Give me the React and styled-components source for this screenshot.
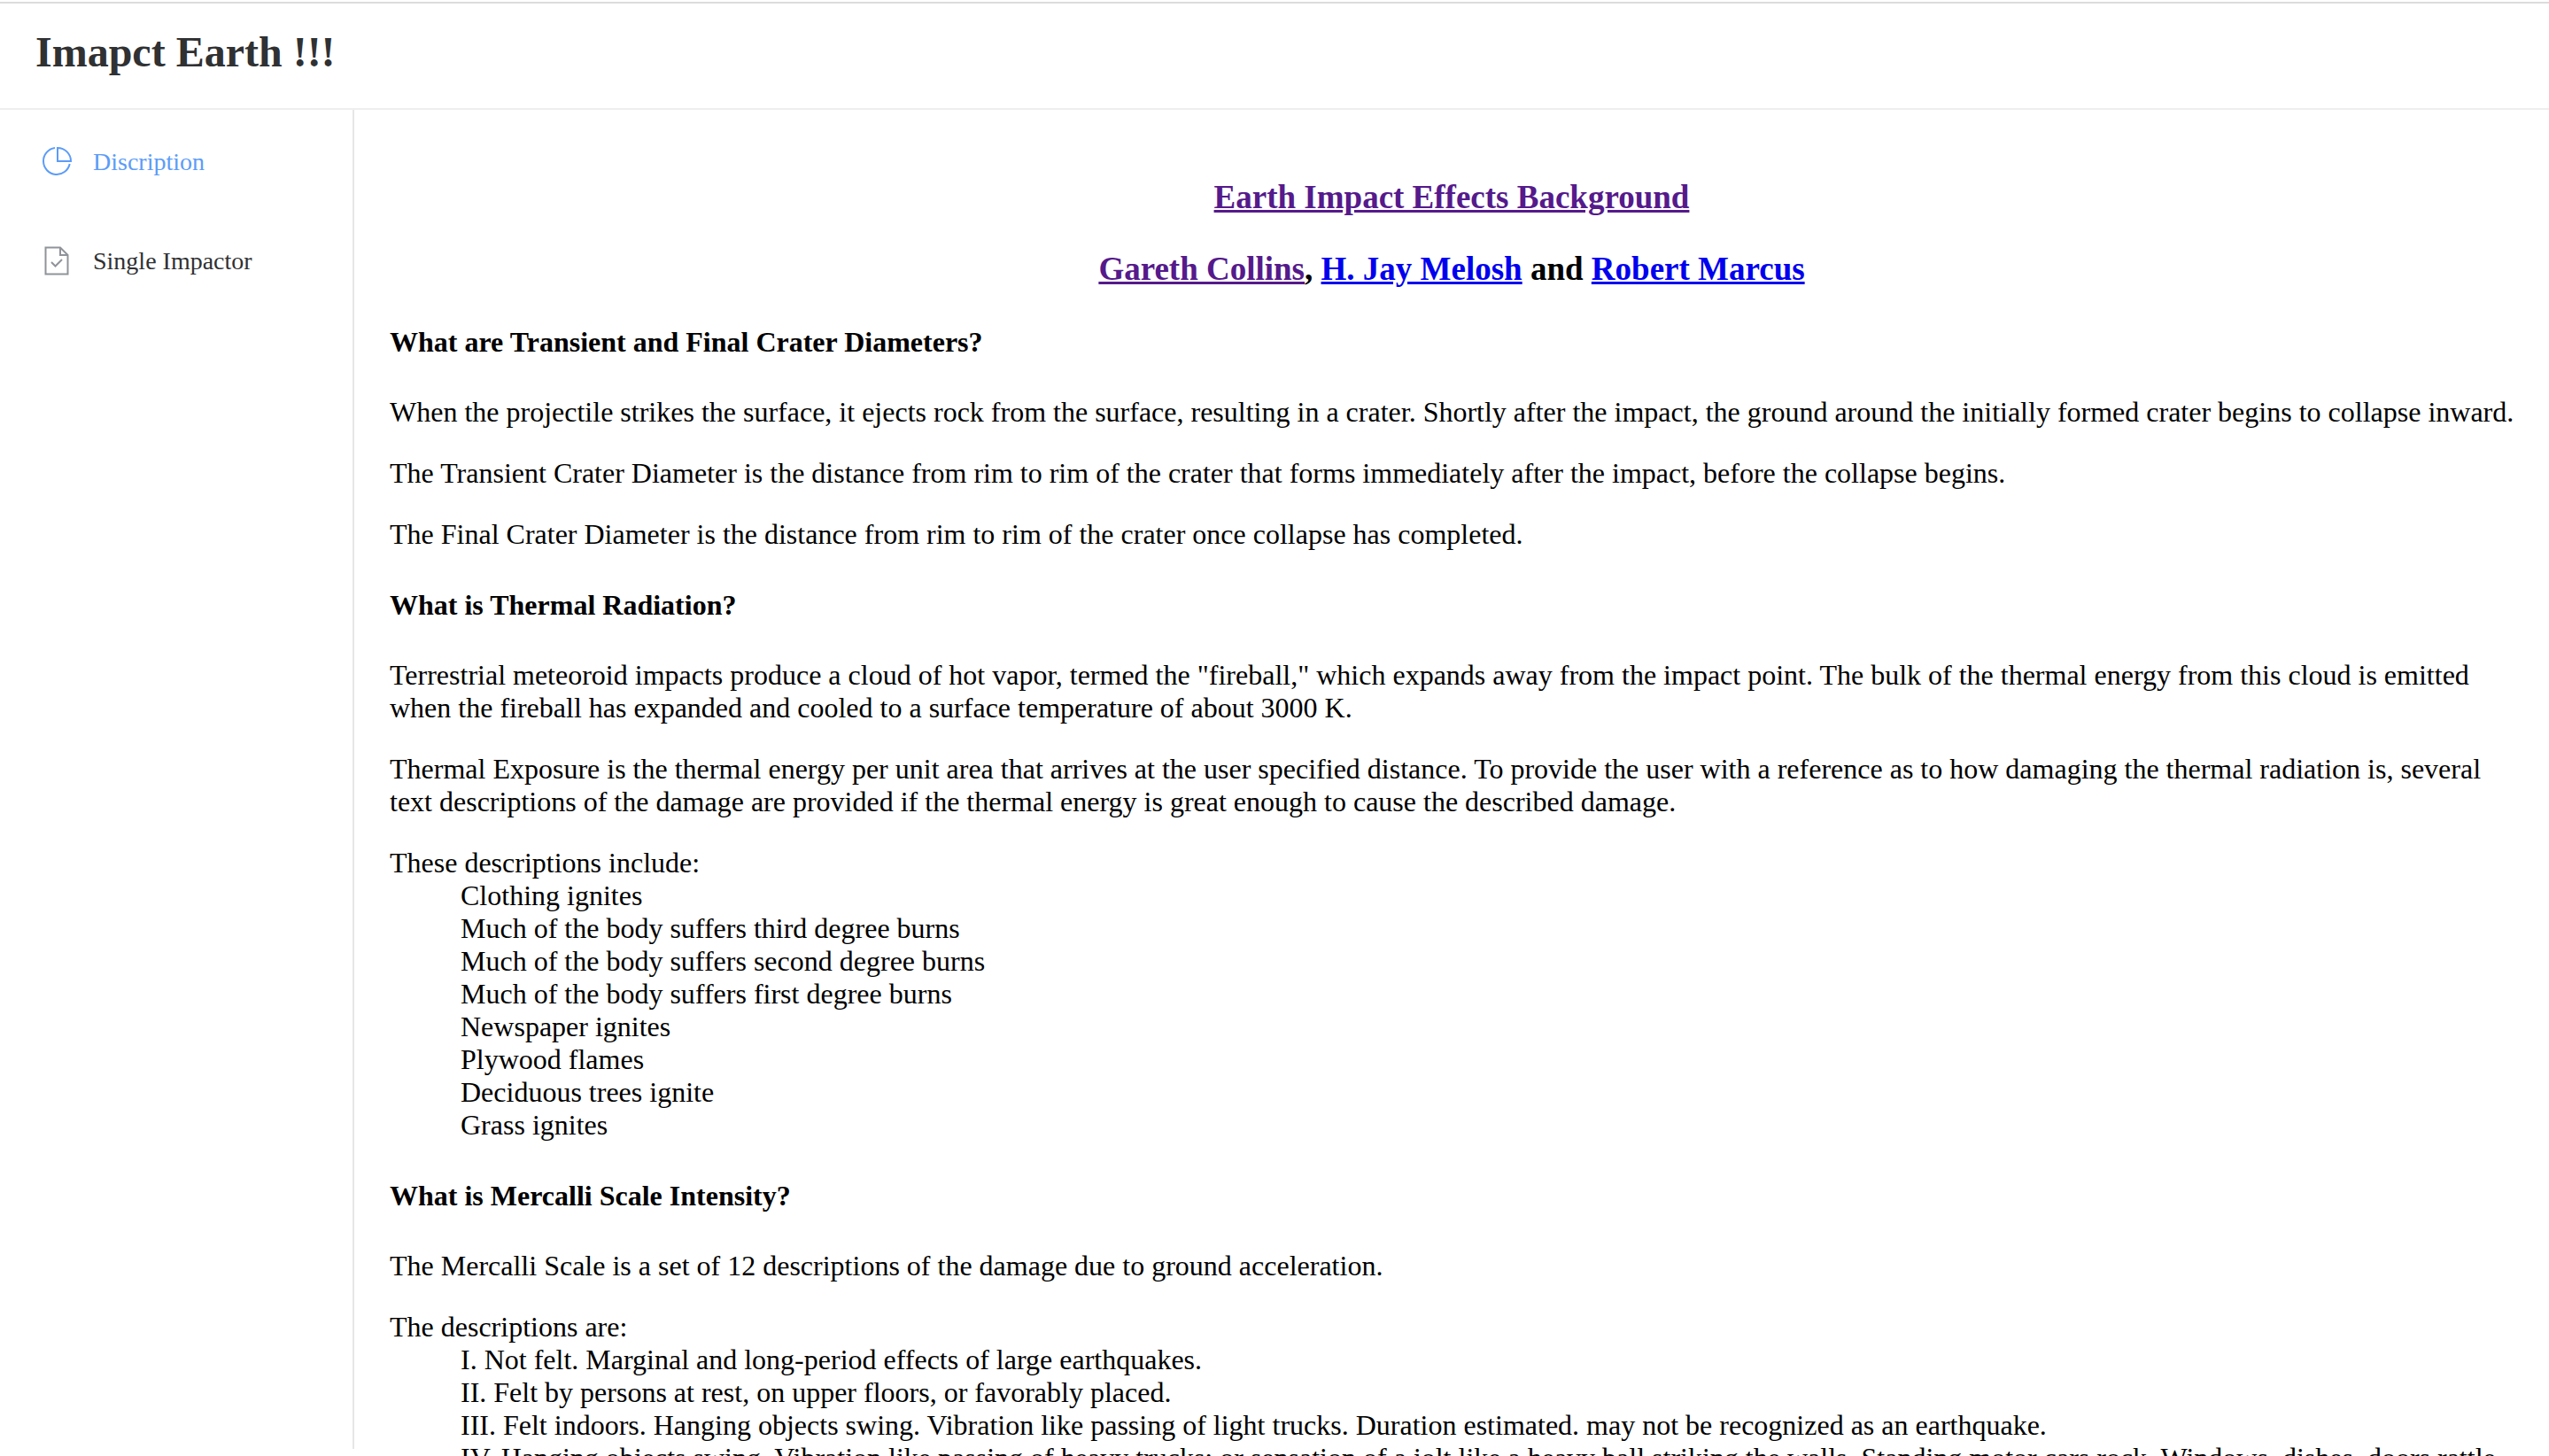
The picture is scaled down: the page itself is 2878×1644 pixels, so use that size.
import React from "react";
import styled, { createGlobalStyle } from "styled-components";

const GlobalStyle = createGlobalStyle`
  *, *::before, *::after { box-sizing: border-box; }
  body {
    margin: 0;
    background: #fff;
    color: #000;
    font: 32px/37px "Liberation Serif", "Times New Roman", Times, serif;
  }
`;

const Page = styled.div`
  display: flex;
  flex-direction: column;
  height: 100vh;
  padding-top: 2px;
  overflow: hidden;
`;

const Header = styled.header`
  display: flex;
  flex: none;
  align-items: center;
  height: 122px;
  padding: 0 40px 8px;
  border-top: 2px solid #dcdcdc;
  border-bottom: 2px solid #eee;
`;

const Title = styled.h1`
  margin: 0;
  color: #303133;
  font-size: 48px;
  line-height: 56px;
`;

const Body = styled.div`
  display: flex;
  flex: 1;
  min-height: 0;
`;

const Sidebar = styled.nav`
  flex: none;
  width: 400px;
  margin-bottom: 8px;
  padding-top: 3px;
  border-right: 2px solid #e6e6e6;
`;

const MenuItem = styled.a`
  display: flex;
  align-items: center;
  gap: 17px;
  height: 112px;
  padding: 0 40px;
  color: ${(p) => (p.$active ? "#5c9cf8" : "#303133")};
  font-size: 28px;
  line-height: 32px;
  text-decoration: none;
`;

const Icon = styled.svg`
  flex: none;
  width: 48px;
  height: 48px;
  fill: none;
  stroke: ${(p) => (p.$active ? "#5c9cf8" : "#909399")};
  stroke-width: 2;
`;

const Content = styled.main`
  flex: 1;
  min-width: 0;
  padding: 1px 32px 40px 40px;
  overflow: hidden;
`;

const Article = styled.article`
  padding-top: 38px;
`;

const Heading = styled.h2`
  margin: 38px 0;
  padding-right: 8px;
  font-size: 37px;
  line-height: 43px;
  text-align: center;
`;

const Subheading = styled.h3`
  margin: 42px 0;
  font-size: 32px;
  line-height: 37px;
`;

const Link = styled.a`
  color: ${(p) => (p.$visited ? "#551a8b" : "#0000ee")};
`;

const Text = styled.p`
  margin: 32px 0;
`;

const Descriptions = styled.dl`
  margin: 32px 0;
`;

const Description = styled.dd`
  margin: 0 0 0 80px;
`;

const Section = styled.section`
  margin-top: 43px;
`;

const burns = [
  "Clothing ignites",
  "Much of the body suffers third degree burns",
  "Much of the body suffers second degree burns",
  "Much of the body suffers first degree burns",
  "Newspaper ignites",
  "Plywood flames",
  "Deciduous trees ignite",
  "Grass ignites",
];

const mercalli = [
  "I. Not felt. Marginal and long-period effects of large earthquakes.",
  "II. Felt by persons at rest, on upper floors, or favorably placed.",
  "III. Felt indoors. Hanging objects swing. Vibration like passing of light trucks. Duration estimated. may not be recognized as an earthquake.",
  "IV. Hanging objects swing. Vibration like passing of heavy trucks; or sensation of a jolt like a heavy ball striking the walls. Standing motor cars rock. Windows, dishes, doors rattle.",
];

function DescriptionList({ term, items }) {
  return (
    <Descriptions>
      <dt>{term}</dt>
      {items.map((item) => (
        <Description key={item}>{item}</Description>
      ))}
    </Descriptions>
  );
}

export default function App() {
  return (
    <>
      <GlobalStyle />
      <Page>
        <Header>
          <Title>Imapct Earth !!!</Title>
        </Header>
        <Body>
          <Sidebar>
            <MenuItem href="#description" $active aria-current="page">
              <Icon viewBox="0 0 48 48" $active aria-hidden="true">
                <path d="M22 8.1A15 15 0 1 0 38.7 26" />
                <path d="M25 8V23H40A15 15 0 0 0 25 8Z" />
              </Icon>
              Discription
            </MenuItem>
            <MenuItem href="#single-impactor">
              <Icon viewBox="0 0 48 48" aria-hidden="true">
                <path d="M11.5 8.5H28L36.5 17V38.5H11.5Z" />
                <path d="M28 8.5V17H36.5" />
                <path d="M18 25L22.5 29.5L30 22" />
              </Icon>
              Single Impactor
            </MenuItem>
          </Sidebar>
          <Content>
            <Article>
              <Heading>
                <Link href="#background" $visited>Earth Impact Effects Background</Link>
              </Heading>
              <Heading>
                <Link href="#collins" $visited>Gareth Collins</Link>,{" "}
                <Link href="#melosh">H. Jay Melosh</Link> and{" "}
                <Link href="#marcus">Robert Marcus</Link>
              </Heading>

              <Section>
                <Subheading>What are Transient and Final Crater Diameters?</Subheading>
                <Text>
                  When the projectile strikes the surface, it ejects rock from the surface, resulting in
                  a crater. Shortly after the impact, the ground around the initially formed crater
                  begins to collapse inward.
                </Text>
                <Text>
                  The Transient Crater Diameter is the distance from rim to rim of the crater that forms
                  immediately after the impact, before the collapse begins.
                </Text>
                <Text>
                  The Final Crater Diameter is the distance from rim to rim of the crater once collapse
                  has completed.
                </Text>
              </Section>

              <Section>
                <Subheading>What is Thermal Radiation?</Subheading>
                <Text>
                  Terrestrial meteoroid impacts produce a cloud of hot vapor, termed the "fireball,"
                  which expands away from the impact point. The bulk of the thermal energy from this
                  cloud is emitted when the fireball has expanded and cooled to a surface temperature of
                  about 3000 K.
                </Text>
                <Text>
                  Thermal Exposure is the thermal energy per unit area that arrives at the user specified
                  distance. To provide the user with a reference as to how damaging the thermal radiation
                  is, several text descriptions of the damage are provided if the thermal energy is great
                  enough to cause the described damage.
                </Text>
                <DescriptionList term="These descriptions include:" items={burns} />
              </Section>

              <Section>
                <Subheading>What is Mercalli Scale Intensity?</Subheading>
                <Text>
                  The Mercalli Scale is a set of 12 descriptions of the damage due to ground
                  acceleration.
                </Text>
                <DescriptionList term="The descriptions are:" items={mercalli} />
              </Section>
            </Article>
          </Content>
        </Body>
      </Page>
    </>
  );
}
